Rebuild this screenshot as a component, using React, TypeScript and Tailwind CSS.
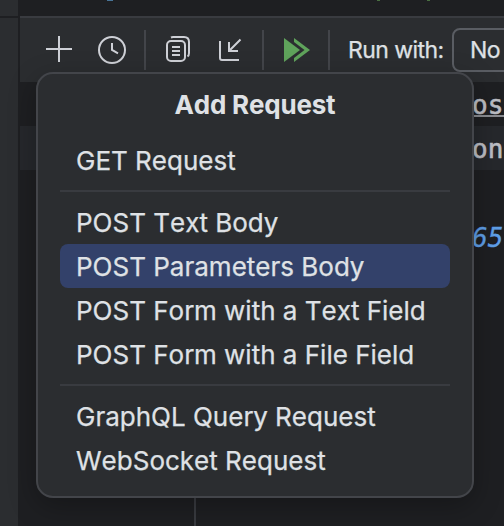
import type { ReactNode } from 'react';

const Separator = () => <div className="mx-[22px] my-2 h-[2px] bg-[#393b40]" />;

const Item = ({ children, selected = false }: { children: ReactNode; selected?: boolean }) => (
  <div
    className={`mx-[22px] flex h-11 items-center whitespace-nowrap rounded-lg px-4 pt-[2px] text-[26px] leading-none [-webkit-text-stroke:0.25px] ${
      selected ? 'bg-[#33416a]' : ''
    }`}
  >
    <span>{children}</span>
  </div>
);

const Divider = () => <div className="h-10 w-[2px] shrink-0 bg-[#43454a]" />;

const Toolbar = () => (
  <div className="flex h-[64px] items-center bg-[#2b2d30]">
    <svg className="ml-[23px] shrink-0" width="32" height="32" viewBox="0 0 32 32" stroke="#ced0d6" strokeWidth="2" fill="none">
      <path d="M3 15H29M16 2V28" />
    </svg>
    <svg className="ml-[21px] shrink-0" width="32" height="32" viewBox="0 0 32 32" stroke="#ced0d6" strokeWidth="2" fill="none">
      <circle cx="16" cy="16" r="13" />
      <path d="M16 9V16L22 19.3" />
    </svg>
    <div className="ml-4 flex"><Divider /></div>
    <svg className="ml-[16px] shrink-0" width="32" height="32" viewBox="0 0 32 32" stroke="#ced0d6" strokeWidth="2" fill="none">
      <rect x="5" y="7" width="18" height="20" rx="4" />
      <path d="M10 13H18M10 17H18M10 21H18" />
      <path d="M9 3.5Q10 3 11 3H22Q27 3 27 8V19Q27 21.5 25.5 22.5" />
    </svg>
    <svg className="ml-[20px] shrink-0" width="32" height="32" viewBox="0 0 32 32" stroke="#ced0d6" strokeWidth="2" fill="none">
      <path d="M6 7V24Q6 26 8 26H25M15 8V17H24M15.5 16.5L26.5 5.5" />
    </svg>
    <div className="ml-4 flex"><Divider /></div>
    <svg className="ml-[16px] shrink-0" width="32" height="32" viewBox="0 0 32 32" fill="#5fa35b">
      <path d="M4 4L20 16L4 28Z" />
      <path d="M14 4L30 16L14 28V24L24.5 16L14 8Z" />
    </svg>
    <div className="ml-4 flex"><Divider /></div>
    <span className="ml-[18px] w-[104px] shrink-0 whitespace-nowrap pt-[1px] text-[23px] leading-none tracking-[-0.55px] [-webkit-text-stroke:0.25px]">Run with:</span>
    <div className="-mt-[1px] flex h-11 w-[220px] shrink-0 items-center rounded-lg border-2 border-[#5a5d63] pl-4 pt-[2px] text-[23px] leading-none tracking-[-0.5px] [-webkit-text-stroke:0.25px]">
      <span>No</span>
    </div>
  </div>
);

const Popup = () => (
  <div className="absolute left-[36px] top-[72px] h-[426px] w-[438px] rounded-[17px] border-2 border-[#43454a] bg-[#2b2d30] shadow-[0_8px_28px_rgba(0,0,0,0.28)] [font-kerning:none]">
    <div className="flex h-[64px] items-center justify-center pb-[2px] text-[26px] font-bold leading-none tracking-[-0.2px]">
      Add Request
    </div>
    <Item>GET Request</Item>
    <Separator />
    <Item>POST Text Body</Item>
    <Item selected>POST Parameters Body</Item>
    <Item>POST Form with a Text Field</Item>
    <Item>POST Form with a File Field</Item>
    <Separator />
    <Item>GraphQL Query Request</Item>
    <Item>WebSocket Request</Item>
  </div>
);

export default function App() {
  return (
    <div className="relative flex h-[526px] w-[504px] overflow-hidden bg-[#1e1f22] font-['Inter',sans-serif] text-[#dfe1e5]">
      <div className="flex w-[18px] shrink-0 flex-col bg-[#2b2d30]">
        <div className="mt-4 h-[2px] bg-[#1e1f22]" />
      </div>
      <div className="ml-[2px] flex w-[484px] flex-col overflow-hidden">
        <div className="flex h-4 shrink-0">
          <div className="ml-[87px] h-[1px] w-[6px] bg-[#487497]" />
          <div className="ml-[264px] h-[1px] w-[3px] bg-[#496f41]" />
          <div className="ml-[47px] h-[1px] w-[3px] bg-[#496f41]" />
        </div>
        <div className="h-[2px] shrink-0 bg-[#393b40]" />
        <Toolbar />
        <div className="flex flex-1 flex-col font-['DejaVu_Sans_Mono',monospace] text-[26px] leading-[46px] text-[#bcbec4]">
          <div className="flex h-11 justify-end">
            <span className="h-[35px] w-[32px] border-b-2 border-[#8a8c91] [-webkit-text-stroke:0.6px]">os</span>
          </div>
          <div className="flex h-11 justify-end bg-[#26282c]">
            <span className="w-[32px] [-webkit-text-stroke:0.6px]">on</span>
          </div>
          <div className="h-11" />
          <div className="flex h-11 justify-end italic leading-[48px] text-[#5f9fe8]">
            <span className="w-[32px] [-webkit-text-stroke:0.3px]">65</span>
          </div>
          <div className="ml-[174px] w-[2px] flex-1 bg-[#393b40]" />
        </div>
      </div>
      <Popup />
    </div>
  );
}
